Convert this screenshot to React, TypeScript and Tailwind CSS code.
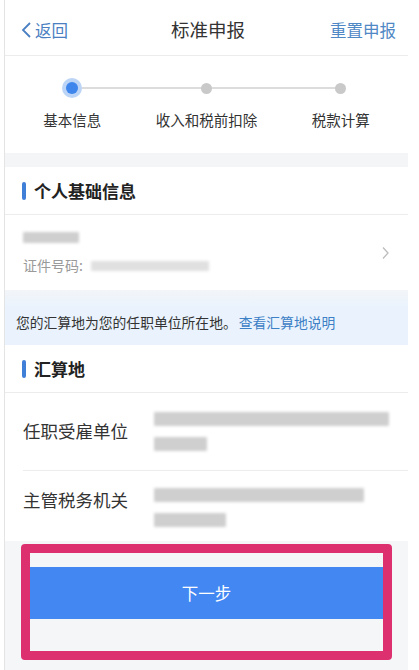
const font = { fontFamily: '"Noto Sans CJK SC", "Noto Sans", sans-serif' };

function Blur({ className }: { className: string }) {
  return <div className={`rounded-[1px] bg-[#cfcfcf] blur-[1.5px] ${className}`} />;
}

function SectionTitle({ title }: { title: string }) {
  return (
    <div className="flex h-[48px] items-center border-b border-[#ececec] pl-[17px]">
      <span className="mr-[8px] h-[18px] w-[4px] rounded-full bg-[#3f7fd8]" />
      <span className="text-[17px] font-bold text-[#222]">{title}</span>
    </div>
  );
}

function Steps() {
  const steps = ["基本信息", "收入和税前扣除", "税款计算"];
  return (
    <div className="relative h-[97px]">
      <div className="absolute left-[67px] right-[67px] top-[31px] h-[2px] bg-[#dcdcdc]" />
      <div className="grid grid-cols-3">
        {steps.map((s, i) => (
          <div key={s} className="flex flex-col items-center">
            <div className="relative flex h-[64px] items-center justify-center">
              {i === 0 ? (
                <span className="flex h-[20px] w-[20px] items-center justify-center rounded-full bg-[#bcd5f6]">
                  <span className="h-[12px] w-[12px] rounded-full bg-[#3e86ec]" />
                </span>
              ) : (
                <span className="h-[11px] w-[11px] rounded-full bg-[#c9c9c9]" />
              )}
            </div>
            <span className="-mt-[11px] text-[14.5px] text-[#333]">{s}</span>
          </div>
        ))}
      </div>
    </div>
  );
}

export default function App() {
  return (
    <div className="h-[670px] w-[419px] overflow-hidden bg-white" style={font}>
      <div className="ml-[4px] flex h-full w-[404px] flex-col border-l border-[#e4e4e4]">
        <header className="flex h-[56px] items-center justify-between border-b border-[#ececec] pl-[15px] pr-[12px] pt-[5px]">
          <div className="flex w-[90px] items-center text-[16.5px] text-[#4a80c2]">
            <svg width="12" height="18" viewBox="0 0 12 18" className="mr-[3px]">
              <path d="M10 2 L3 9 L10 16" fill="none" stroke="#4a80c2" strokeWidth="1.8" />
            </svg>
            返回
          </div>
          <div className="text-[18.5px] text-[#333]">标准申报</div>
          <div className="w-[90px] text-right text-[16.5px] text-[#4f88c5]">重置申报</div>
        </header>

        <Steps />

        <div className="h-[14px] bg-[#f4f5f7]" />

        <SectionTitle title="个人基础信息" />
        <div className="flex h-[75px] items-center justify-between pl-[18px] pr-[18px]">
          <div className="flex flex-col">
            <Blur className="mt-[3px] h-[11px] w-[56px]" />
            <div className="mt-[12px] flex items-center">
              <span className="text-[14px] text-[#9a9a9a]">证件号码:</span>
              <Blur className="ml-[8px] h-[10px] w-[118px] bg-[#e0e0e0]" />
            </div>
          </div>
          <svg width="9" height="14" viewBox="0 0 9 14">
            <path d="M2 1.5 L7 7 L2 12.5" fill="none" stroke="#bdbdbd" strokeWidth="1.3" />
          </svg>
        </div>

        <div className="flex h-[55px] items-end bg-gradient-to-b from-[#f3f5f8] to-[#eaf3fd] to-[30%] pb-[12px] pl-[11px] text-[13.8px]">
          <span className="text-[#333]">您的汇算地为您的任职单位所在地。</span>
          <span className="ml-[2px] text-[#3c80c6]">查看汇算地说明</span>
        </div>

        <SectionTitle title="汇算地" />
        <div className="flex h-[77px] items-center pl-[18px]">
          <span className="w-[131px] text-[17.5px] text-[#333]">任职受雇单位</span>
          <div className="flex flex-col gap-[11px]">
            <Blur className="h-[14px] w-[235px]" />
            <Blur className="h-[14px] w-[53px]" />
          </div>
        </div>
        <div className="ml-[18px] h-px bg-[#ececec]" />
        <div className="flex h-[70px] items-start pl-[18px]">
          <span className="mt-[16px] w-[131px] text-[17.5px] text-[#333]">主管税务机关</span>
          <div className="mt-[17px] flex flex-col gap-[11px]">
            <Blur className="h-[14px] w-[210px]" />
            <Blur className="h-[14px] w-[72px]" />
          </div>
        </div>

        <div className="flex-1 bg-[#f5f6f8] px-[16px] pt-[3px]">
          <div className="rounded-[4px] border-[9px] border-[#dc306f] bg-[#f5f6f8] pt-[14px] pb-[32px]">
            <div className="flex h-[52px] items-center justify-center bg-[#4287f2] text-[16.5px] text-white">
              下一步
            </div>
          </div>
        </div>
      </div>
    </div>
  );
}
